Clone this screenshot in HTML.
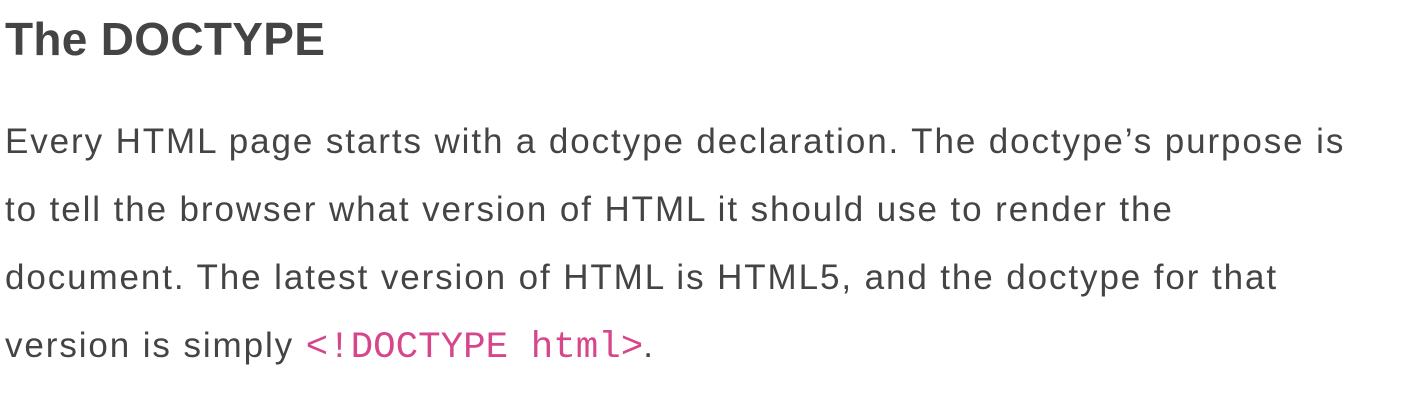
<!DOCTYPE html>
<html><head><style>
body{margin:0;background:#fff;width:1412px;height:408px;overflow:hidden;font-family:"Liberation Sans",sans-serif;color:#444;}
h1{position:absolute;left:5px;top:9px;margin:0;font-size:46px;font-weight:bold;line-height:60px;letter-spacing:0.3px;}
.p{position:absolute;left:5px;top:108px;font-size:35px;line-height:68px;letter-spacing:1.9px;white-space:nowrap;}
code{font-family:"Liberation Mono",monospace;font-size:37.5px;color:#d6468a;letter-spacing:0;}
</style></head><body>
<h1>The DOCTYPE</h1>
<div class="p">Every HTML page starts with a doctype declaration. The doctype’s purpose is<br>to tell the browser what version of HTML it should use to render the<br>document. The latest version of HTML is HTML5, and the doctype for that<br>version is simply <code>&lt;!DOCTYPE html&gt;</code>.</div>
</body></html>
